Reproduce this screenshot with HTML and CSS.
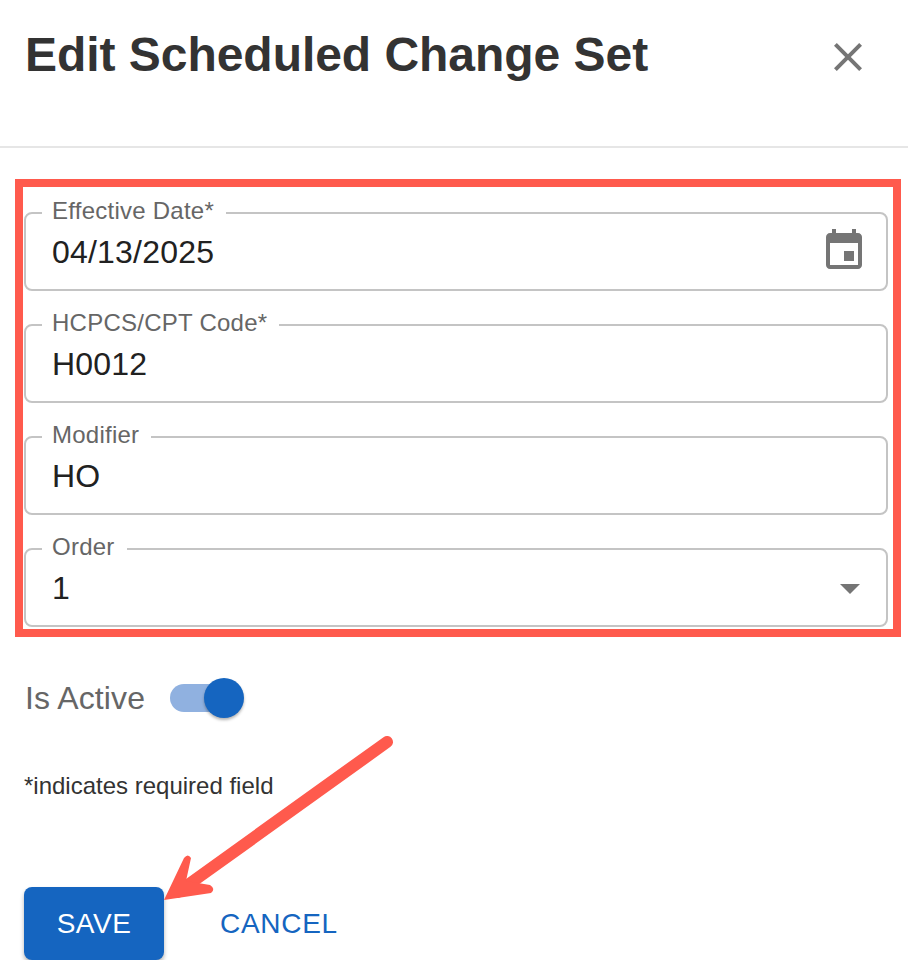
FILE: index.html
```html
<!DOCTYPE html>
<html lang="en">
  <head>
    <meta charset="UTF-8" />
    <meta name="viewport" content="width=device-width, initial-scale=1.0" />
    <title>Edit Scheduled Change Set</title>
    <link rel="stylesheet" href="styles.css">
  </head>
  <body>
    <div class="dialog">
      <div class="header">
        <h2>Edit Scheduled Change Set</h2>
        <svg class="icon close" viewBox="0 0 24 24"><path d="M19 6.41 17.59 5 12 10.59 6.41 5 5 6.41 10.59 12 5 17.59 6.41 19 12 13.41 17.59 19 19 17.59 13.41 12z"/></svg>
      </div>

      <form class="highlight">
        <div class="field">
          <span class="field-label">Effective Date*</span>
          <span class="field-value">04/13/2025</span>
          <svg class="icon calendar" viewBox="0 0 24 24"><path d="M17 12h-5v5h5v-5zM16 1v2H8V1H6v2H5c-1.11 0-1.99.9-1.99 2L3 19c0 1.1.89 2 2 2h14c1.1 0 2-.9 2-2V5c0-1.1-.9-2-2-2h-1V1h-2zm3 18H5V8h14v11z"/></svg>
        </div>
        <div class="field">
          <span class="field-label">HCPCS/CPT Code*</span>
          <span class="field-value">H0012</span>
        </div>
        <div class="field">
          <span class="field-label">Modifier</span>
          <span class="field-value">HO</span>
        </div>
        <div class="field">
          <span class="field-label">Order</span>
          <span class="field-value">1</span>
          <svg class="icon dropdown" viewBox="0 0 24 24"><path d="M7 10l5 5 5-5z"/></svg>
        </div>
      </form>

      <div class="active-row">
        <span class="active-label">Is Active</span>
        <span class="switch"><span class="knob"></span></span>
      </div>

      <p class="required-note">*indicates required field</p>

      <div class="buttons">
        <button type="button" class="save">SAVE</button>
        <button type="button" class="cancel">CANCEL</button>
      </div>
    </div>

    <svg class="arrow" width="908" height="964" viewBox="0 0 908 964">
      <path class="arrow-shaft" d="M387 742 L178 892"/>
      <path class="arrow-head" d="M164 900 L184 858 Q188 853 191 858 L186 881 L210 885 Q216 889 211 893 Z"/>
    </svg>
  </body>
</html>
```

FILE: styles.css
```css
body {
  font-family: "Liberation Sans", Arial, sans-serif;
  background-color: #fff;
  margin: 0;
}
.dialog {
  width: 908px;
}
.header {
  display: flex;
  justify-content: space-between;
  height: 148px;
  padding: 33px 36px 0 25px;
  box-sizing: border-box;
  border-bottom: 2px solid #e6e6e6;
}
h2 {
  margin: 0;
  font-size: 48px;
  line-height: 44px;
  letter-spacing: -0.04px;
  color: #333;
}
.icon {
  width: 48px;
  height: 48px;
  fill: #757575;
  flex: none;
}
.calendar {
  margin-top: -3px;
}
.dropdown {
  margin-right: -6px;
}
.highlight {
  margin: 31px 7px 0 15px;
  border: 8px solid #ff5a4d;
  padding: 25px 5px 2px 1px;
}
.field {
  position: relative;
  display: flex;
  align-items: center;
  justify-content: space-between;
  height: 79px;
  box-sizing: border-box;
  border: 2px solid #c4c4c4;
  border-radius: 8px;
  padding: 1px 18px 0 26px;
  margin-bottom: 33px;
}
.field:last-child {
  margin-bottom: 0;
}
.field-label {
  position: absolute;
  top: -15px;
  left: 16px;
  padding: 0 12px 0 10px;
  background: #fff;
  font-size: 24px;
  line-height: 24px;
  letter-spacing: 0.25px;
  color: #666;
}
.field-value {
  font-size: 32px;
  letter-spacing: 0.2px;
  color: #212121;
}
.active-row {
  display: flex;
  align-items: center;
  margin: 40px 0 0 25px;
  height: 42px;
}
.active-label {
  font-size: 32px;
  letter-spacing: 0.1px;
  color: #666;
}
.switch {
  position: relative;
  width: 55px;
  height: 28px;
  margin-left: 25px;
  border-radius: 14px;
  background-color: #90b1e0;
}
.knob {
  position: absolute;
  top: -6px;
  right: -19px;
  width: 40px;
  height: 40px;
  border-radius: 50%;
  background-color: #1565c0;
  box-shadow: 0 2px 3px rgba(0, 0, 0, 0.3);
}
.required-note {
  margin: 53px 0 0 24px;
  font-size: 24px;
  line-height: 28px;
  color: #333;
}
.buttons {
  display: flex;
  align-items: center;
  margin: 87px 0 0 24px;
}
button {
  font-family: inherit;
  font-size: 28px;
  border: none;
  cursor: pointer;
}
.save {
  width: 140px;
  height: 73px;
  padding: 0;
  border-radius: 8px;
  letter-spacing: 0.5px;
  background-color: #1565c0;
  color: #fff;
  box-shadow: 0 3px 4px rgba(0, 0, 0, 0.3);
}
.cancel {
  margin-left: 56px;
  padding: 0;
  letter-spacing: 0.7px;
  background: none;
  color: #1565c0;
}
.arrow {
  position: absolute;
  top: 0;
  left: 0;
  pointer-events: none;
}
.arrow-shaft {
  fill: none;
  stroke: #ff5a4d;
  stroke-width: 12;
  stroke-linecap: round;
}
.arrow-head {
  fill: #ff5a4d;
}
```
